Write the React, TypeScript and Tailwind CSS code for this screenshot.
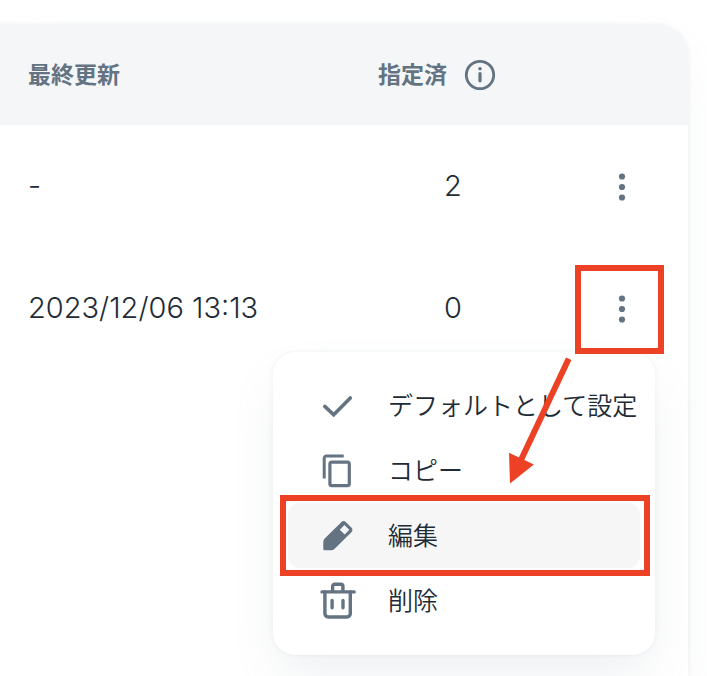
import { ReactNode, useState } from 'react';

type Row = { id: number; updatedAt: string; assigned: number };

const rows: Row[] = [
    { id: 1, updatedAt: '-', assigned: 2 },
    { id: 2, updatedAt: '2023/12/06 13:13', assigned: 0 },
];

function Icon({ children }: { children: ReactNode }) {
    return (
        <svg
            viewBox="0 0 40 40"
            className="size-10 shrink-0 text-[#637381]"
            fill="none"
            stroke="currentColor"
            strokeWidth="3.4"
            strokeLinecap="round"
            strokeLinejoin="round"
            aria-hidden="true"
        >
            {children}
        </svg>
    );
}

const CheckIcon = () => (
    <Icon>
        <path d="M7.8 20.4l8.9 8.4L33.3 12" strokeWidth="3.6" strokeLinejoin="miter" />
    </Icon>
);

const CopyIcon = () => (
    <Icon>
        <path d="M26.7 5.1H9.2a2 2 0 0 0-2 2v20.4" strokeWidth="3" strokeLinecap="butt" />
        <rect x="12.9" y="11.1" width="19.4" height="23.6" rx="2" strokeWidth="3.2" />
    </Icon>
);

const EditIcon = () => (
    <Icon>
        <path
            d="M6.3 33v-7.2a5 5 0 0 1 1.4-3.4L24 6.4a3.6 3.6 0 0 1 5.2 0l4.9 4.9a3.6 3.6 0 0 1 0 5.2L18 32.6a5 5 0 0 1-3.4 1.6H7.5A1.2 1.2 0 0 1 6.3 33zM22.8 13.7l4.9 4.7 4.6-4.7-4.9-4.6z"
            fill="currentColor"
            fillRule="evenodd"
            stroke="none"
        />
    </Icon>
);

const TrashIcon = () => (
    <Icon>
        <path d="M5 10.9h32.2M15.6 10V5.3a2 2 0 0 1 2-2h6.3a2 2 0 0 1 2 2V10" />
        <path d="M7.9 11v21.6a3.4 3.4 0 0 0 3.4 3.4h18.6a3.4 3.4 0 0 0 3.4-3.4V11M15.1 19.4v7.4M26 19.4v7.4" />
    </Icon>
);

const InfoIcon = () => (
    <svg viewBox="0 0 32 32" className="size-8" fill="none" stroke="currentColor" strokeWidth="2.8" aria-hidden="true">
        <circle cx="16" cy="16" r="13.7" />
        <circle cx="16" cy="9.7" r="1.8" fill="currentColor" stroke="none" />
        <path d="M16 14.5v7.3" strokeWidth="3.2" strokeLinecap="round" />
    </svg>
);

const MoreIcon = () => (
    <svg viewBox="0 0 40 40" className="size-10 text-[#637381]" fill="currentColor" aria-hidden="true">
        <circle cx="20" cy="9.5" r="3.1" />
        <circle cx="20" cy="20" r="3.1" />
        <circle cx="20" cy="30.5" r="3.1" />
    </svg>
);

const actions = [
    { id: 'default', label: 'デフォルトとして設定', icon: <CheckIcon /> },
    { id: 'copy', label: 'コピー', icon: <CopyIcon /> },
    { id: 'edit', label: '編集', icon: <EditIcon /> },
    { id: 'delete', label: '削除', icon: <TrashIcon /> },
];

function ActionMenu() {
    const [active, setActive] = useState('edit');

    return (
        <div
            role="menu"
            className="absolute top-[87px] right-[11px] w-[382px] rounded-[22px] bg-white px-[15px] pt-[21px] pb-[22px] shadow-[0_0_4px_rgba(145,158,171,0.16),0_24px_48px_-8px_rgba(145,158,171,0.16)]"
        >
            {actions.map((action) => (
                <button
                    key={action.id}
                    type="button"
                    role="menuitem"
                    onClick={() => setActive(action.id)}
                    className={`relative flex h-[65px] w-full items-center gap-[31px] rounded-xl pl-[29px] text-left text-[25px] font-[350] whitespace-nowrap ${
                        active === action.id ? 'bg-[#f6f6f6]' : ''
                    }`}
                >
                    {action.icon}
                    {action.label}
                    {/* Highlight on the edit action */}
                    {action.id === 'edit' && (
                        <span className="pointer-events-none absolute -top-2 -right-2.5 -bottom-2 -left-2 border-6 border-[#ec4125]" />
                    )}
                </button>
            ))}
        </div>
    );
}

// Frame around the kebab button and the arrow down to the edit action
function Guide() {
    return (
        <>
            <span className="pointer-events-none absolute top-0 -left-[3px] size-[89px] border-6 border-[#ec4125]" />
            <svg
                viewBox="0 0 80 130"
                className="pointer-events-none absolute top-[90px] -left-[72px] h-[130px] w-20"
                aria-hidden="true"
            >
                <path d="M62.7 3.7L14.5 106" stroke="#ec4125" strokeWidth="6" />
                <path d="M3 97.7l24.9 11.7L4 128.4z" fill="#ec4125" />
            </svg>
        </>
    );
}

export default function App() {
    const [openId, setOpenId] = useState<number | null>(2);

    return (
        <main
            lang="ja"
            className="flex min-h-screen flex-col overflow-hidden bg-white pt-6 pr-[19px] font-['Open_Sans','Noto_Sans_CJK_JP',sans-serif] text-[#212b36]"
        >
            <div className="flex-1 rounded-tr-[32px] bg-white shadow-[0_0_4px_rgba(145,158,171,0.16),0_24px_48px_-8px_rgba(145,158,171,0.12)]">
                <table className="w-full table-fixed">
                    <thead>
                        <tr className="h-[101px] text-left text-[23px] text-[#637381]">
                            <th scope="col" className="bg-[#f4f6f8] pl-7 font-bold">
                                最終更新
                            </th>
                            <th scope="col" className="w-[206px] bg-[#f4f6f8] pl-7 font-bold">
                                <span className="flex items-center gap-[17px]">
                                    指定済
                                    <button type="button" aria-label="指定済について">
                                        <InfoIcon />
                                    </button>
                                </span>
                            </th>
                            <th scope="col" className="w-[132px] rounded-tr-[32px] bg-[#f4f6f8]" />
                        </tr>
                    </thead>
                    <tbody>
                        {rows.map((row) => (
                            <tr key={row.id} className="h-[122px]">
                                <td className="pl-7 font-[Inter,sans-serif] text-[29px] font-light">{row.updatedAt}</td>
                                <td className="text-center font-[Inter,sans-serif] text-[29px] font-light">
                                    {row.assigned}
                                </td>
                                <td className="pt-0.5">
                                    <div className="relative mx-auto size-[88px]">
                                        <button
                                            type="button"
                                            aria-label="メニューを開く"
                                            aria-haspopup="menu"
                                            aria-expanded={openId === row.id}
                                            onClick={() => setOpenId(openId === row.id ? null : row.id)}
                                            className="flex size-full items-center justify-center"
                                        >
                                            <MoreIcon />
                                        </button>
                                        {openId === row.id && (
                                            <>
                                                <ActionMenu />
                                                <Guide />
                                            </>
                                        )}
                                    </div>
                                </td>
                            </tr>
                        ))}
                    </tbody>
                </table>
            </div>
        </main>
    );
}
